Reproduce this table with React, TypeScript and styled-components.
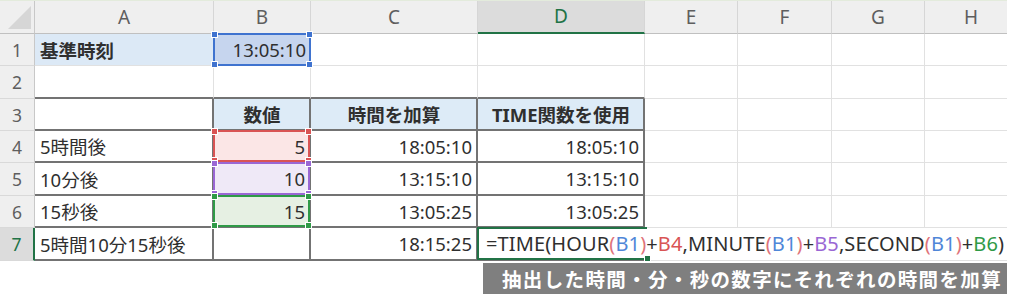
import React from "react";
import styled, { createGlobalStyle, css } from "styled-components";

const Global = createGlobalStyle`
  html, body { margin: 0; padding: 0; background: #ffffff; }
  body { font-family: "Noto Sans", "Noto Sans CJK JP", sans-serif; }
`;

const GRID = "#e1e1e1";
const DARK = "2px solid #737373";
const EXCEL_GREEN = "#217346";

const Page = styled.div`
  width: 1024px;
  height: 303px;
  background: #fff;
  overflow: hidden;
`;

const Sheet = styled.div`
  width: 1007px;
  overflow: hidden;
  display: grid;
  grid-template-columns: 35px 179px 97px 167px 167px 93px 94px 93px 93px;
  grid-template-rows: 33px 32px 33px 32px 32px 33px 32px 33px;
  border-top: 1px solid #e3ebdc;
  box-sizing: border-box;
`;

const Corner = styled.div`
  position: relative;
  background: #efefef;
  border-right: 1px solid #c8c8c8;
  border-bottom: 1px solid #c0c0c0;
  box-sizing: border-box;
  &::after {
    content: "";
    position: absolute;
    right: 3px;
    bottom: 4px;
    width: 0;
    height: 0;
    border-left: 23px solid transparent;
    border-bottom: 23px solid #d6d6d6;
  }
`;

const ColHeader = styled.div<{ $active?: boolean }>`
  box-sizing: border-box;
  display: flex;
  align-items: center;
  justify-content: center;
  background: ${(p) => (p.$active ? "#dcdcdc" : "#efefef")};
  color: ${(p) => (p.$active ? EXCEL_GREEN : "#5e5e5e")};
  font-family: "Noto Sans", sans-serif;
  font-size: 19px;
  font-weight: 400;
  border-right: 1px solid #d6d6d6;
  border-bottom: ${(p) => (p.$active ? `2px solid ${EXCEL_GREEN}` : "1px solid #c0c0c0")};
  padding-bottom: 1px;
`;

const RowHeader = styled.div<{ $active?: boolean }>`
  box-sizing: border-box;
  display: flex;
  align-items: center;
  justify-content: center;
  background: ${(p) => (p.$active ? "#dcdcdc" : "#efefef")};
  color: ${(p) => (p.$active ? EXCEL_GREEN : "#5e5e5e")};
  font-family: "Noto Sans", sans-serif;
  font-size: 17.5px;
  border-right: ${(p) => (p.$active ? `2px solid ${EXCEL_GREEN}` : "1px solid #c8c8c8")};
  border-bottom: 1px solid #d9d9d9;
`;

type CellProps = {
  $bg?: string;
  $align?: "left" | "right" | "center";
  $bold?: boolean;
  $right?: string;
  $bottom?: string;
  $spill?: boolean;
};

const Cell = styled.div<CellProps>`
  box-sizing: border-box;
  position: relative;
  display: flex;
  align-items: center;
  justify-content: ${(p) =>
    p.$align === "right" ? "flex-end" : p.$align === "center" ? "center" : "flex-start"};
  padding: 0 4px 0 5px;
  background: ${(p) => p.$bg ?? "transparent"};
  color: #2f2f2f;
  font-size: 18.5px;
  font-weight: ${(p) => (p.$bold ? 700 : 400)};
  white-space: nowrap;
  border-right: ${(p) => p.$right ?? `1px solid ${GRID}`};
  border-bottom: ${(p) => p.$bottom ?? `1px solid ${GRID}`};
  ${(p) =>
    p.$spill &&
    css`
      overflow: visible;
      z-index: 3;
    `}
`;

const Highlight = styled.div<{ $color: string; $noRight?: boolean }>`
  position: absolute;
  top: -1px;
  left: -1px;
  right: ${(p) => (p.$noRight ? "-2px" : "-1px")};
  bottom: -1px;
  border: 2px solid ${(p) => p.$color};
  ${(p) => p.$noRight && css`border-right: none;`}
  z-index: 2;
  pointer-events: none;
`;

const Handle = styled.span<{ $color: string; $pos: "tl" | "tr" | "bl" | "br" }>`
  position: absolute;
  width: 5px;
  height: 5px;
  background: ${(p) => p.$color};
  border: 1px solid #fff;
  ${(p) => (p.$pos[0] === "t" ? "top: -4px;" : "bottom: -4px;")}
  ${(p) => (p.$pos[1] === "l" ? "left: -4px;" : "right: -4px;")}
`;

const Formula = styled.span`
  font-family: "Noto Sans", sans-serif;
  font-size: 20px;
  letter-spacing: 0.12px;
  color: #2f2f2f;
  margin-left: 3px;
`;

const Tok = styled.span<{ $c: string }>`
  color: ${(p) => p.$c};
`;

const CaptionRow = styled.div`
  width: 1007px;
  display: flex;
  justify-content: flex-end;
  margin-top: 2px;
`;

const Caption = styled.div`
  width: 524px;
  height: 31px;
  box-sizing: border-box;
  padding-left: 19px;
  background: #7f7f7f;
  color: #ffffff;
  font-family: "Noto Sans CJK JP", sans-serif;
  font-size: 19.5px;
  font-weight: 700;
  letter-spacing: 1.35px;
  line-height: 31px;
  white-space: nowrap;
`;

const COLS = ["A", "B", "C", "D", "E", "F", "G", "H"];

const Mark = ({ color, all = true, noRight = false }: { color: string; all?: boolean; noRight?: boolean }) => (
  <Highlight $color={color} $noRight={noRight}>
    {all && <Handle $color={color} $pos="tl" />}
    {all && <Handle $color={color} $pos="tr" />}
    {all && <Handle $color={color} $pos="bl" />}
    <Handle $color={color} $pos="br" />
  </Highlight>
);

const RED = "#d95454";
const PAREN = "#e0737a";
const BLUE = "#4f86d8";
const PURPLE = "#9a67d4";
const GREEN = "#2f9a47";

const EmptyTail = ({ n, spill }: { n: number; spill?: boolean }) => (
  <>
    {Array.from({ length: n }).map((_, i) => (
      <Cell key={i} $right={spill ? "none" : undefined} />
    ))}
  </>
);

export default function App() {
  return (
    <Page>
      <Global />
      <Sheet>
        <Corner />
        {COLS.map((c) => (
          <ColHeader key={c} $active={c === "D"}>
            {c}
          </ColHeader>
        ))}

        {/* Row 1 */}
        <RowHeader>1</RowHeader>
        <Cell $bg="#dce9f6" $bold>基準時刻</Cell>
        <Cell $bg="#c6d5ee" $align="right">
          13:05:10
          <Mark color="#3f73cf" />
        </Cell>
        <Cell />
        <Cell />
        <EmptyTail n={4} />

        {/* Row 2 */}
        <RowHeader>2</RowHeader>
        <Cell $bottom={DARK} />
        <Cell $bottom={DARK} />
        <Cell $bottom={DARK} />
        <Cell $bottom={DARK} />
        <EmptyTail n={4} />

        {/* Row 3 */}
        <RowHeader>3</RowHeader>
        <Cell $right={DARK} $bottom={DARK} />
        <Cell $right={DARK} $bottom={DARK} $bg="#ddebf7" $bold $align="center">数値</Cell>
        <Cell $right={DARK} $bottom={DARK} $bg="#ddebf7" $bold $align="center">時間を加算</Cell>
        <Cell $right={DARK} $bottom={DARK} $bg="#ddebf7" $bold $align="center">TIME関数を使用</Cell>
        <EmptyTail n={4} />

        {/* Row 4 */}
        <RowHeader>4</RowHeader>
        <Cell $right={DARK} $bottom={DARK}>5時間後</Cell>
        <Cell $right={DARK} $bottom={DARK} $bg="#fbe6e6" $align="right">
          5
          <Mark color={RED} />
        </Cell>
        <Cell $right={DARK} $bottom={DARK} $align="right">18:05:10</Cell>
        <Cell $right={DARK} $bottom={DARK} $align="right">18:05:10</Cell>
        <EmptyTail n={4} />

        {/* Row 5 */}
        <RowHeader>5</RowHeader>
        <Cell $right={DARK} $bottom={DARK}>10分後</Cell>
        <Cell $right={DARK} $bottom={DARK} $bg="#efe9f7" $align="right">
          10
          <Mark color={PURPLE} />
        </Cell>
        <Cell $right={DARK} $bottom={DARK} $align="right">13:15:10</Cell>
        <Cell $right={DARK} $bottom={DARK} $align="right">13:15:10</Cell>
        <EmptyTail n={4} />

        {/* Row 6 */}
        <RowHeader>6</RowHeader>
        <Cell $right={DARK} $bottom={DARK}>15秒後</Cell>
        <Cell $right={DARK} $bottom={DARK} $bg="#e6f0e3" $align="right">
          15
          <Mark color={GREEN} />
        </Cell>
        <Cell $right={DARK} $bottom={DARK} $align="right">13:05:25</Cell>
        <Cell $right={DARK} $bottom={DARK} $align="right">13:05:25</Cell>
        <EmptyTail n={4} />

        {/* Row 7 */}
        <RowHeader $active>7</RowHeader>
        <Cell $right={DARK} $bottom={DARK}>5時間10分15秒後</Cell>
        <Cell $right={DARK} $bottom={DARK} />
        <Cell $right={DARK} $bottom={DARK} $align="right">18:15:25</Cell>
        <Cell $right="none" $bottom={DARK} $spill>
          <Formula>
            =TIME(HOUR<Tok $c={PAREN}>(</Tok>
            <Tok $c={BLUE}>B1</Tok>
            <Tok $c={PAREN}>)</Tok>+<Tok $c={RED}>B4</Tok>,MINUTE<Tok $c={PAREN}>(</Tok>
            <Tok $c={BLUE}>B1</Tok>
            <Tok $c={PAREN}>)</Tok>+<Tok $c={PURPLE}>B5</Tok>,SECOND<Tok $c={PAREN}>(</Tok>
            <Tok $c={BLUE}>B1</Tok>
            <Tok $c={PAREN}>)</Tok>+<Tok $c={GREEN}>B6</Tok>)
          </Formula>
          <Highlight $color={EXCEL_GREEN} $noRight>
            <Handle $color={EXCEL_GREEN} $pos="br" />
          </Highlight>
        </Cell>
        <EmptyTail n={4} spill />
      </Sheet>
      <CaptionRow>
        <Caption>抽出した時間・分・秒の数字にそれぞれの時間を加算</Caption>
      </CaptionRow>
    </Page>
  );
}
